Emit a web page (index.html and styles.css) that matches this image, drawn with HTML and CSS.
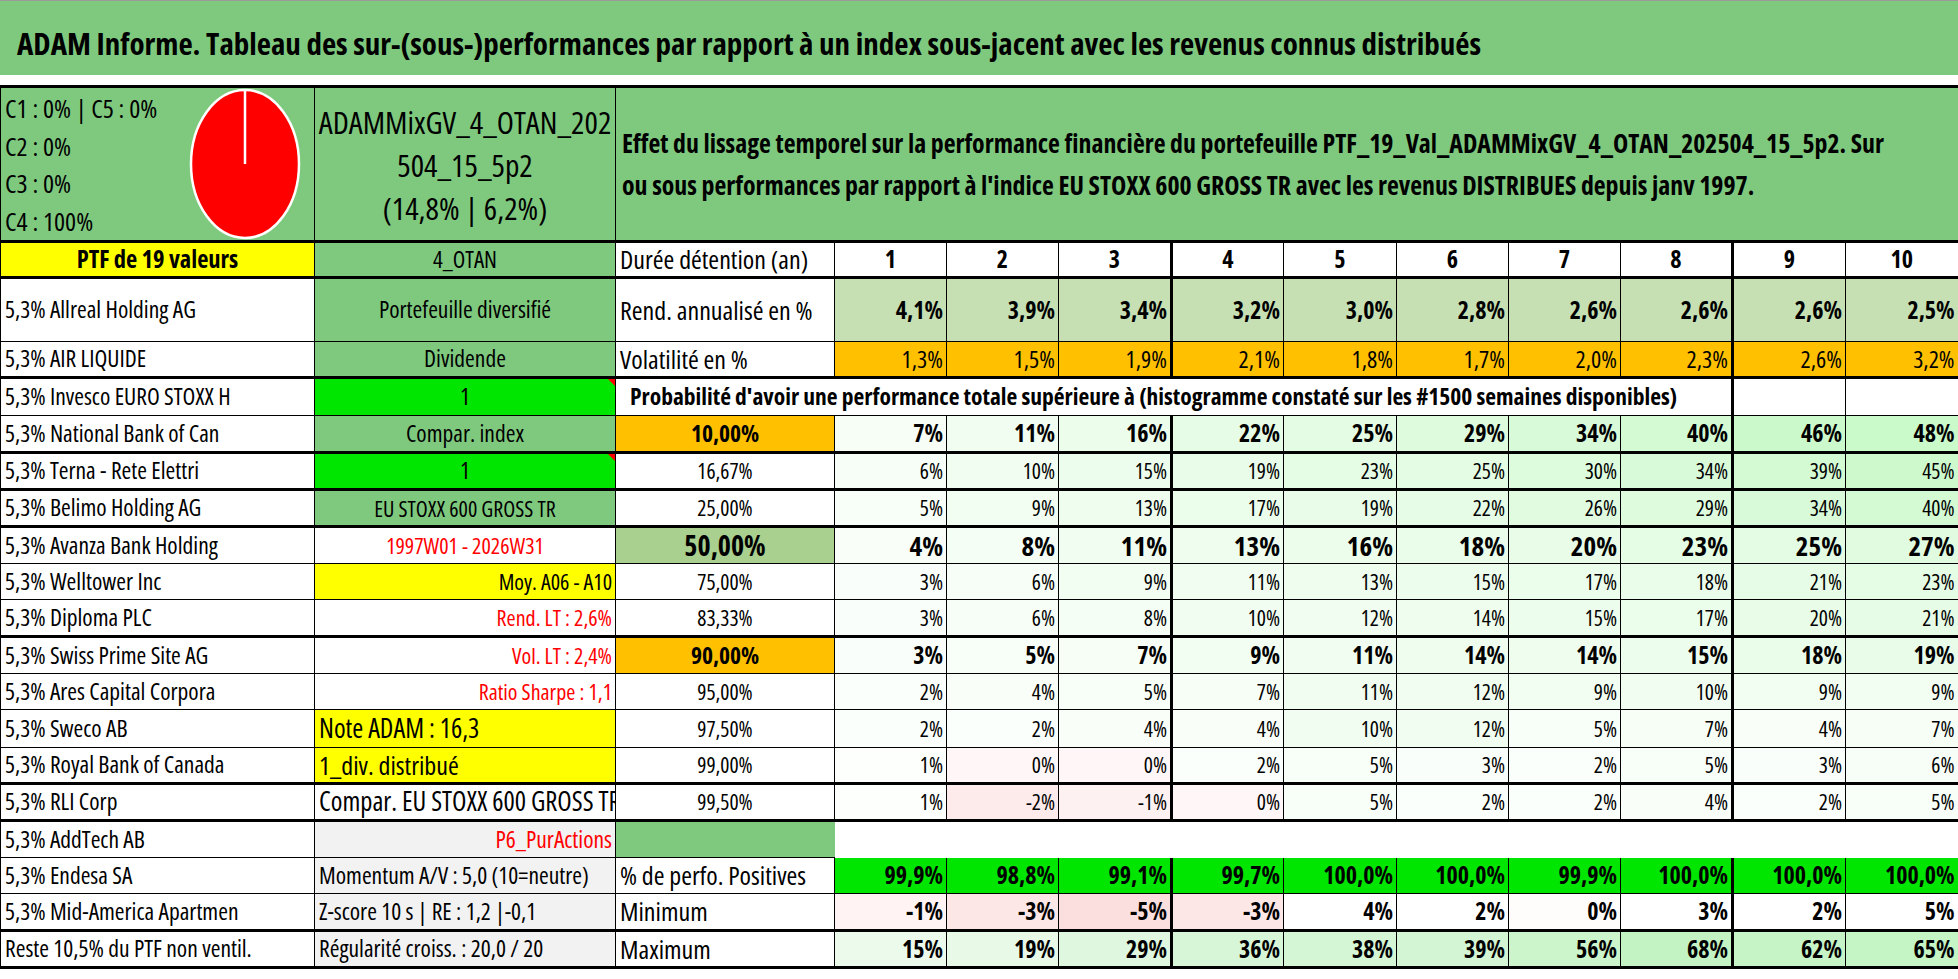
FILE: index.html
```html
<!DOCTYPE html>
<html lang="fr">
<head>
<meta charset="utf-8">
<title>ADAM Informe</title>
<link rel="stylesheet" href="styles.css">
</head>
<body>
<header class="title">ADAM Informe. Tableau des sur-(sous-)performances par rapport à un index sous-jacent avec les revenus connus distribués</header>
<div class="gap"></div>
<table class="sheet">
  <colgroup>
    <col class="ca"><col class="cb"><col class="cc">
    <col class="w112"><col class="w112"><col class="w113"><col class="w112 k"><col class="w113"><col class="w112"><col class="w112"><col class="w112"><col class="w113 k"><col class="w113">
  </colgroup>
  <tbody>
    <tr class="r-pie tb tt">
      <td class="g pie-cell">
        <div class="pie-wrap">
          <div class="legend">
            <span>C1 : 0% | C5 : 0%</span>
            <span>C2 : 0%</span>
            <span>C3 : 0%</span>
            <span>C4 : 100%</span>
          </div>
          <svg class="pie" width="112" height="152" viewBox="0 0 112 152">
            <ellipse cx="56" cy="76" rx="54" ry="74" fill="#ff0000" stroke="#ffffff" stroke-width="2.5"/>
            <line x1="56" y1="2" x2="56" y2="76" stroke="#ffffff" stroke-width="2.5"/>
          </svg>
        </div>
      </td>
      <td class="g c ptfname">ADAMMixGV_4_OTAN_202<br>504_15_5p2<br>(14,8% | 6,2%)</td>
      <td class="g effet" colspan="11">Effet du lissage temporel sur la performance financière du portefeuille PTF_19_Val_ADAMMixGV_4_OTAN_202504_15_5p2. Sur<br>ou sous performances par rapport à l'indice EU STOXX 600 GROSS TR avec les revenus DISTRIBUES depuis janv 1997.</td>
    </tr>
    <tr class="r-36 tb">
      <td class="y c ptf">PTF de 19 valeurs</td>
      <td class="g c otan">4_OTAN</td>
      <td class="lc">Durée détention (an)</td>
      <td class="c nb">1</td><td class="c nb">2</td><td class="c nb">3</td><td class="c nb">4</td><td class="c nb">5</td><td class="c nb">6</td><td class="c nb">7</td><td class="c nb">8</td><td class="c nb">9</td><td class="c nb">10</td>
    </tr>
    <tr class="r-64">
      <td class="nm">5,3% Allreal Holding AG</td>
      <td class="g c lb">Portefeuille diversifié</td>
      <td class="lc">Rend. annualisé en %</td>
      <td class="rd r nb">4,1%</td><td class="rd r nb">3,9%</td><td class="rd r nb">3,4%</td><td class="rd r nb">3,2%</td><td class="rd r nb">3,0%</td><td class="rd r nb">2,8%</td><td class="rd r nb">2,6%</td><td class="rd r nb">2,6%</td><td class="rd r nb">2,6%</td><td class="rd r nb">2,5%</td>
    </tr>
    <tr class="r-36 tb">
      <td class="nm">5,3% AIR LIQUIDE</td>
      <td class="g c lb">Dividende</td>
      <td class="lc">Volatilité en %</td>
      <td class="o r nv">1,3%</td><td class="o r nv">1,5%</td><td class="o r nv">1,9%</td><td class="o r nv">2,1%</td><td class="o r nv">1,8%</td><td class="o r nv">1,7%</td><td class="o r nv">2,0%</td><td class="o r nv">2,3%</td><td class="o r nv">2,6%</td><td class="o r nv">3,2%</td>
    </tr>
    <tr class="r-38">
      <td class="nm">5,3% Invesco EURO STOXX H</td>
      <td class="lg c lb flag">1</td>
      <td class="prob" colspan="9">Probabilité d'avoir une performance totale supérieure à (histogramme constaté sur les #1500 semaines disponibles)</td>
      <td></td><td></td>
    </tr>
    <tr class="r-37 tb">
      <td class="nm">5,3% National Bank of Can</td>
      <td class="g c lb">Compar. index</td>
      <td class="o c pb">10,00%</td>
      <td class="r nb" style="background:rgb(246,254,246)">7%</td><td class="r nb" style="background:rgb(241,253,241)">11%</td><td class="r nb" style="background:rgb(236,253,236)">16%</td><td class="r nb" style="background:rgb(230,252,230)">22%</td><td class="r nb" style="background:rgb(227,252,227)">25%</td><td class="r nb" style="background:rgb(222,251,222)">29%</td><td class="r nb" style="background:rgb(217,250,217)">34%</td><td class="r nb" style="background:rgb(211,250,211)">40%</td><td class="r nb" style="background:rgb(204,249,204)">46%</td><td class="r nb" style="background:rgb(202,249,202)">48%</td>
    </tr>
    <tr class="r-37 tb">
      <td class="nm">5,3% Terna - Rete Elettri</td>
      <td class="lg c lb flag">1</td>
      <td class="c pn">16,67%</td>
      <td class="r n" style="background:rgb(247,254,247)">6%</td><td class="r n" style="background:rgb(242,253,242)">10%</td><td class="r n" style="background:rgb(237,253,237)">15%</td><td class="r n" style="background:rgb(233,252,233)">19%</td><td class="r n" style="background:rgb(229,252,229)">23%</td><td class="r n" style="background:rgb(227,252,227)">25%</td><td class="r n" style="background:rgb(221,251,221)">30%</td><td class="r n" style="background:rgb(217,250,217)">34%</td><td class="r n" style="background:rgb(212,250,212)">39%</td><td class="r n" style="background:rgb(205,249,205)">45%</td>
    </tr>
    <tr class="r-37 tb">
      <td class="nm">5,3% Belimo Holding AG</td>
      <td class="g c idx">EU STOXX 600 GROSS TR</td>
      <td class="c pn">25,00%</td>
      <td class="r n" style="background:rgb(248,254,248)">5%</td><td class="r n" style="background:rgb(243,254,243)">9%</td><td class="r n" style="background:rgb(239,253,239)">13%</td><td class="r n" style="background:rgb(235,253,235)">17%</td><td class="r n" style="background:rgb(233,252,233)">19%</td><td class="r n" style="background:rgb(230,252,230)">22%</td><td class="r n" style="background:rgb(225,251,225)">26%</td><td class="r n" style="background:rgb(222,251,222)">29%</td><td class="r n" style="background:rgb(217,250,217)">34%</td><td class="r n" style="background:rgb(211,250,211)">40%</td>
    </tr>
    <tr class="r-37">
      <td class="nm">5,3% Avanza Bank Holding</td>
      <td class="c red rl">1997W01 - 2026W31</td>
      <td class="ol c pbig">50,00%</td>
      <td class="r nbig" style="background:rgb(249,254,249)">4%</td><td class="r nbig" style="background:rgb(245,254,245)">8%</td><td class="r nbig" style="background:rgb(241,253,241)">11%</td><td class="r nbig" style="background:rgb(239,253,239)">13%</td><td class="r nbig" style="background:rgb(236,253,236)">16%</td><td class="r nbig" style="background:rgb(234,252,234)">18%</td><td class="r nbig" style="background:rgb(232,252,232)">20%</td><td class="r nbig" style="background:rgb(229,252,229)">23%</td><td class="r nbig" style="background:rgb(227,252,227)">25%</td><td class="r nbig" style="background:rgb(224,251,224)">27%</td>
    </tr>
    <tr class="r-36">
      <td class="nm">5,3% Welltower Inc</td>
      <td class="y r rl">Moy. A06 - A10</td>
      <td class="c pn">75,00%</td>
      <td class="r n" style="background:rgb(250,254,250)">3%</td><td class="r n" style="background:rgb(247,254,247)">6%</td><td class="r n" style="background:rgb(243,254,243)">9%</td><td class="r n" style="background:rgb(241,253,241)">11%</td><td class="r n" style="background:rgb(239,253,239)">13%</td><td class="r n" style="background:rgb(237,253,237)">15%</td><td class="r n" style="background:rgb(235,253,235)">17%</td><td class="r n" style="background:rgb(234,252,234)">18%</td><td class="r n" style="background:rgb(231,252,231)">21%</td><td class="r n" style="background:rgb(229,252,229)">23%</td>
    </tr>
    <tr class="r-37 tb">
      <td class="nm">5,3% Diploma PLC</td>
      <td class="r red rl">Rend. LT : 2,6%</td>
      <td class="c pn">83,33%</td>
      <td class="r n" style="background:rgb(250,254,250)">3%</td><td class="r n" style="background:rgb(247,254,247)">6%</td><td class="r n" style="background:rgb(245,254,245)">8%</td><td class="r n" style="background:rgb(242,253,242)">10%</td><td class="r n" style="background:rgb(240,253,240)">12%</td><td class="r n" style="background:rgb(238,253,238)">14%</td><td class="r n" style="background:rgb(237,253,237)">15%</td><td class="r n" style="background:rgb(235,253,235)">17%</td><td class="r n" style="background:rgb(232,252,232)">20%</td><td class="r n" style="background:rgb(231,252,231)">21%</td>
    </tr>
    <tr class="r-37">
      <td class="nm">5,3% Swiss Prime Site AG</td>
      <td class="r red rl">Vol. LT : 2,4%</td>
      <td class="o c pb">90,00%</td>
      <td class="r nb" style="background:rgb(250,254,250)">3%</td><td class="r nb" style="background:rgb(248,254,248)">5%</td><td class="r nb" style="background:rgb(246,254,246)">7%</td><td class="r nb" style="background:rgb(243,254,243)">9%</td><td class="r nb" style="background:rgb(241,253,241)">11%</td><td class="r nb" style="background:rgb(238,253,238)">14%</td><td class="r nb" style="background:rgb(238,253,238)">14%</td><td class="r nb" style="background:rgb(237,253,237)">15%</td><td class="r nb" style="background:rgb(234,252,234)">18%</td><td class="r nb" style="background:rgb(233,252,233)">19%</td>
    </tr>
    <tr class="r-36">
      <td class="nm">5,3% Ares Capital Corpora</td>
      <td class="r red rl">Ratio Sharpe : 1,1</td>
      <td class="c pn">95,00%</td>
      <td class="r n" style="background:rgb(251,255,251)">2%</td><td class="r n" style="background:rgb(249,254,249)">4%</td><td class="r n" style="background:rgb(248,254,248)">5%</td><td class="r n" style="background:rgb(246,254,246)">7%</td><td class="r n" style="background:rgb(241,253,241)">11%</td><td class="r n" style="background:rgb(240,253,240)">12%</td><td class="r n" style="background:rgb(243,254,243)">9%</td><td class="r n" style="background:rgb(242,253,242)">10%</td><td class="r n" style="background:rgb(243,254,243)">9%</td><td class="r n" style="background:rgb(243,254,243)">9%</td>
    </tr>
    <tr class="r-38">
      <td class="nm">5,3% Sweco AB</td>
      <td class="y yl">Note ADAM : 16,3</td>
      <td class="c pn">97,50%</td>
      <td class="r n" style="background:rgb(251,255,251)">2%</td><td class="r n" style="background:rgb(251,255,251)">2%</td><td class="r n" style="background:rgb(249,254,249)">4%</td><td class="r n" style="background:rgb(249,254,249)">4%</td><td class="r n" style="background:rgb(242,253,242)">10%</td><td class="r n" style="background:rgb(240,253,240)">12%</td><td class="r n" style="background:rgb(248,254,248)">5%</td><td class="r n" style="background:rgb(246,254,246)">7%</td><td class="r n" style="background:rgb(249,254,249)">4%</td><td class="r n" style="background:rgb(246,254,246)">7%</td>
    </tr>
    <tr class="r-36 tb">
      <td class="nm">5,3% Royal Bank of Canada</td>
      <td class="y yl2">1_div. distribué</td>
      <td class="c pn">99,00%</td>
      <td class="r n" style="background:rgb(252,255,252)">1%</td><td class="r n" style="background:rgb(255,247,247)">0%</td><td class="r n" style="background:rgb(255,247,247)">0%</td><td class="r n" style="background:rgb(251,255,251)">2%</td><td class="r n" style="background:rgb(248,254,248)">5%</td><td class="r n" style="background:rgb(250,254,250)">3%</td><td class="r n" style="background:rgb(251,255,251)">2%</td><td class="r n" style="background:rgb(248,254,248)">5%</td><td class="r n" style="background:rgb(250,254,250)">3%</td><td class="r n" style="background:rgb(247,254,247)">6%</td>
    </tr>
    <tr class="r-37 tb">
      <td class="nm">5,3% RLI Corp</td>
      <td class="yl">Compar. EU STOXX 600 GROSS TR</td>
      <td class="c pn">99,50%</td>
      <td class="r n" style="background:rgb(252,255,252)">1%</td><td class="r n" style="background:rgb(253,235,235)">-2%</td><td class="r n" style="background:rgb(254,241,241)">-1%</td><td class="r n" style="background:rgb(255,247,247)">0%</td><td class="r n" style="background:rgb(248,254,248)">5%</td><td class="r n" style="background:rgb(251,255,251)">2%</td><td class="r n" style="background:rgb(251,255,251)">2%</td><td class="r n" style="background:rgb(249,254,249)">4%</td><td class="r n" style="background:rgb(251,255,251)">2%</td><td class="r n" style="background:rgb(248,254,248)">5%</td>
    </tr>
    <tr class="r-37">
      <td class="nm">5,3% AddTech AB</td>
      <td class="gr r red pa">P6_PurActions</td>
      <td class="g"></td>
      <td class="blank" colspan="10"></td>
    </tr>
    <tr class="r-36">
      <td class="nm">5,3% Endesa SA</td>
      <td class="gr gt">Momentum A/V : 5,0 (10=neutre)</td>
      <td class="lc">% de perfo. Positives</td>
      <td class="lg r nb">99,9%</td><td class="lg r nb">98,8%</td><td class="lg r nb">99,1%</td><td class="lg r nb">99,7%</td><td class="lg r nb">100,0%</td><td class="lg r nb">100,0%</td><td class="lg r nb">99,9%</td><td class="lg r nb">100,0%</td><td class="lg r nb">100,0%</td><td class="lg r nb">100,0%</td>
    </tr>
    <tr class="r-37 tb">
      <td class="nm">5,3% Mid-America Apartmen</td>
      <td class="gr gt">Z-score 10 s | RE : 1,2 |-0,1</td>
      <td class="lc">Minimum</td>
      <td class="r nb" style="background:rgb(255,243,243)">-1%</td><td class="r nb" style="background:rgb(252,230,230)">-3%</td><td class="r nb" style="background:rgb(251,222,222)">-5%</td><td class="r nb" style="background:rgb(252,230,230)">-3%</td><td class="r nb">4%</td><td class="r nb">2%</td><td class="r nb" style="background:rgb(255,252,252)">0%</td><td class="r nb">3%</td><td class="r nb">2%</td><td class="r nb">5%</td>
    </tr>
    <tr class="r-37 tb">
      <td class="nm">Reste 10,5% du PTF non ventil.</td>
      <td class="gr gt">Régularité croiss. : 20,0 / 20</td>
      <td class="lc">Maximum</td>
      <td class="r nb" style="background:rgb(236,250,236)">15%</td><td class="r nb" style="background:rgb(232,249,232)">19%</td><td class="r nb" style="background:rgb(222,247,222)">29%</td><td class="r nb" style="background:rgb(215,246,215)">36%</td><td class="r nb" style="background:rgb(213,246,213)">38%</td><td class="r nb" style="background:rgb(212,245,212)">39%</td><td class="r nb" style="background:rgb(204,245,204)">56%</td><td class="r nb" style="background:rgb(195,243,195)">68%</td><td class="r nb" style="background:rgb(199,244,199)">62%</td><td class="r nb" style="background:rgb(197,244,197)">65%</td>
    </tr>
  </tbody>
</table>
</body>
</html>
```
FILE: styles.css
```css
* { box-sizing: border-box; }
html, body { margin: 0; padding: 0; background: #ffffff; }
body {
  width: 1958px;
  height: 979px;
  overflow: hidden;
  color: #000000;
  font-family: "Open Sans", "Roboto", "Liberation Sans", sans-serif;
  font-stretch: 75%;
}
.title {
  height: 75px;
  background: #7fc97f;
  border-top: 1px solid #9a9a9a;
  display: flex;
  align-items: center;
  padding: 10px 0 0 17px;
  font-size: 31px;
  font-weight: 700;
  white-space: nowrap;
}
.gap { height: 10px; }

table.sheet {
  width: 1958px;
  table-layout: fixed;
  border-collapse: collapse;
  font-size: 23.5px;
}
col.ca { width: 314px; }
col.cb { width: 301px; }
col.cc { width: 219px; }
col.w112 { width: 112px; }
col.w113 { width: 113px; }
col.k { border-left: 3px solid #000000; }

.sheet td {
  border: 1px solid #000000;
  padding: 0 4px;
  white-space: nowrap;
  overflow: hidden;
  vertical-align: middle;
  line-height: 1.1;
  font-weight: 500;
}
.sheet tr.tt td { border-top: 3px solid #000000; }
.sheet tr.tb td { border-bottom: 3px solid #000000; }
.sheet td:last-child { border-right: 2px solid #000000; }

.r-pie { height: 155px; }
.r-36 { height: 36px; }
.r-37 { height: 37px; }
.r-38 { height: 38px; }
.r-64 { height: 64px; }

/* fills */
.sheet .g { background: #7fc97f; }
.sheet .y { background: #ffff00; }
.sheet .lg { background: #00e600; }
.sheet .gr { background: #f2f2f2; }
.sheet .o { background: #ffc000; }
.sheet .rd { background: #c6e0b4; }
.sheet .ol { background: #a9d08e; }

.sheet .c { text-align: center; }
.sheet .r { text-align: right; padding-right: 3px; }
.sheet .red { color: #ff0000; }

/* text sizes */
.sheet .nm { font-size: 23.5px; }
.sheet .ptf { font-size: 24.5px; font-weight: 700; }
.sheet td.otan { font-size: 23px; }
.sheet .lb { font-size: 23.5px; }
.sheet .idx { font-size: 22px; }
.sheet .rl { font-size: 22px; }
.sheet .yl { font-size: 26.5px; }
.sheet .yl2 { font-size: 26px; }
.sheet .pa { font-size: 23.5px; }
.sheet .gt { font-size: 23.5px; }
.sheet .lc { font-size: 26px; }
.sheet .n { font-size: 21.5px; font-weight: 400; }
.sheet .nv { font-size: 24px; font-weight: 400; }
.sheet .nb { font-size: 24px; font-weight: 700; }
.sheet .nbig { font-size: 27px; font-weight: 700; }
.sheet .pn { font-size: 21.5px; }
.sheet .pb { font-size: 23.5px; font-weight: 700; }
.sheet .pbig { font-size: 28px; font-weight: 700; }
.sheet .prob { font-size: 23.5px; font-weight: 700; padding-left: 14px; }

/* header block */
.sheet .pie-cell { padding: 0 13px 0 4px; vertical-align: top; }
.pie-wrap {
  display: flex;
  justify-content: space-between;
  align-items: flex-start;
}
.legend {
  display: flex;
  flex-direction: column;
  font-size: 26px;
  line-height: 37.5px;
  padding-top: 2px;
}
.pie { display: block; }
.sheet .ptfname { font-size: 31.5px; line-height: 43px; padding: 0 2px; }
.sheet .effet { font-size: 25.8px; font-weight: 700; line-height: 42px; padding-left: 6px; }

/* comment indicator */
.flag { position: relative; }
.flag::after {
  content: "";
  position: absolute;
  top: 0;
  right: 0;
  border-top: 7px solid #ff0000;
  border-left: 7px solid transparent;
}

.sheet td.blank {
  background: #ffffff;
  border-left-style: hidden;
  border-right-style: hidden;
  border-bottom-style: hidden;
}
```
